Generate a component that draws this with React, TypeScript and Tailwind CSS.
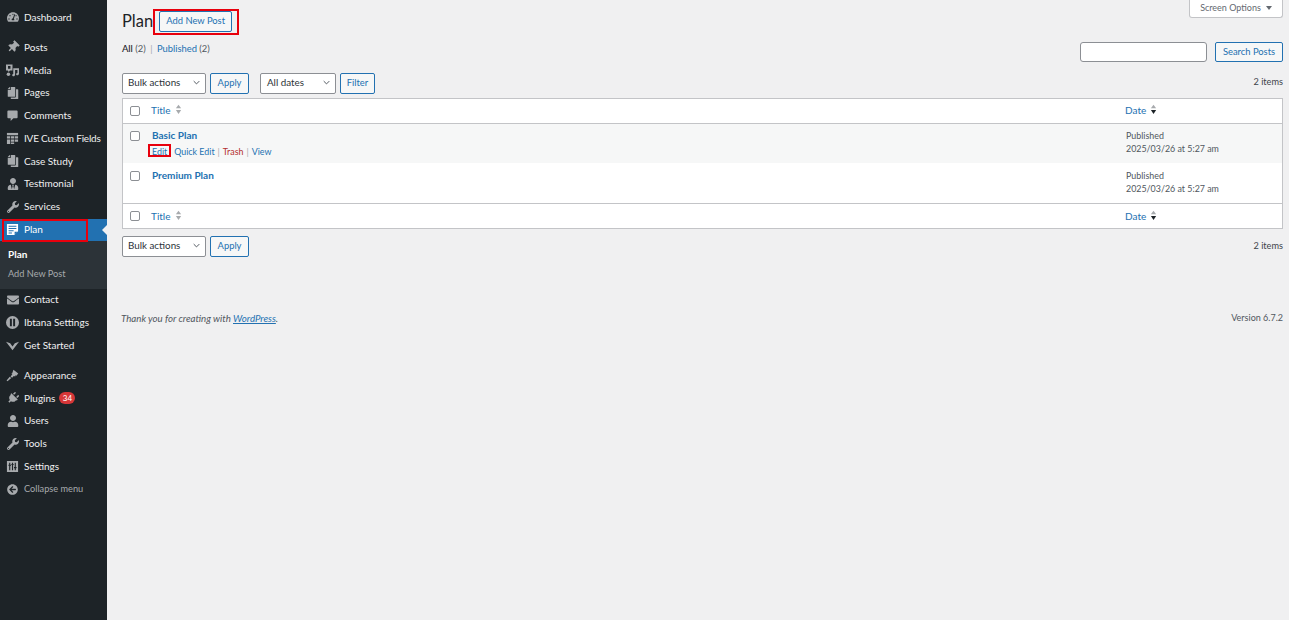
import React from "react";
import {
  FaTachometerAlt,
  FaThumbtack,
  FaCopy,
  FaUser,
  FaWrench,
  FaEnvelope,
  FaPlug,
  FaArrowCircleLeft,
  FaUserTie,
} from "react-icons/fa";

const font = { fontFamily: "Lato, 'Noto Sans', sans-serif" };

function MediaIcon() {
  return (
    <svg viewBox="0 0 14 14" className="w-[13px] h-[13px]" fill="#a7aaad">
      <path d="M0 .5h7v6.5H4.2L3 8.6 1.8 7H0z M2.2 2.2v2.8h2.6V2.2z" fillRule="evenodd" />
      <path d="M7.8 4.5H14v6c0 1.2-1.2 1.9-2.2 1.5-.9-.3-1.1-1.2-.7-1.9.3-.4.7-.6 1.2-.5V6.5H9.8v5.2c0 1.2-1.2 1.9-2.2 1.5-.9-.3-1.1-1.2-.7-1.9.3-.4.6-.5.9-.5z" />
      <circle cx="2.6" cy="11" r="1.9" />
    </svg>
  );
}

function CommentIcon() {
  return (
    <svg viewBox="0 0 14 14" className="w-[13px] h-[13px]" fill="#a7aaad">
      <path d="M2.5 1.5h9a1 1 0 0 1 1 1v6.5a1 1 0 0 1-1 1H8l-3 3v-3H2.5a1 1 0 0 1-1-1V2.5a1 1 0 0 1 1-1z" />
    </svg>
  );
}

function FieldsIcon() {
  return (
    <svg viewBox="0 0 14 14" className="w-[13px] h-[13px]" fill="#a7aaad">
      <path d="M1 1h12v2.5H1z" />
      <path d="M1 4.5h3.5V7H1zM5.3 4.5h3.5V7H5.3zM9.5 4.5H13V7H9.5z" />
      <path d="M1 8h3.5v5H1zM5.3 8h3.5v2.5H5.3zM9.5 8H13v2.5H9.5zM5.3 11.3h3.5V13H5.3z" />
    </svg>
  );
}

function PlanIcon() {
  return (
    <svg viewBox="0 0 14 14" className="w-[13px] h-[13px]" fill="#fff">
      <path
        d="M1 1h12v8l-4 4H1z M2.8 3v1.1h8.4V3z M2.8 5.4v1.1h8.4V5.4z M2.8 7.8v1.1h5.4V7.8z M2.8 10.1v1.1h3.6v-1.1z"
        fillRule="evenodd"
      />
      <path d="M9.3 12.6V9.4h3.2z" fill="#2271b1" />
    </svg>
  );
}

function IbtanaIcon() {
  return (
    <svg viewBox="0 0 14 14" className="w-[13px] h-[13px]" fill="#a7aaad">
      <path
        d="M7 0a7 7 0 1 1 0 14A7 7 0 0 1 7 0z M4.2 3v8h2.1V3z M7.7 3v8h2.1V3z"
        fillRule="evenodd"
      />
    </svg>
  );
}

function StartedIcon() {
  return (
    <svg viewBox="0 0 14 14" className="w-[13px] h-[13px]" fill="#a7aaad">
      <path d="M0 3l4.5 1.6L7 8l2.5-3.4L14 3 7 12z" />
    </svg>
  );
}

function AppearanceIcon() {
  return (
    <svg viewBox="0 0 14 14" className="w-[13px] h-[13px]" fill="#a7aaad">
      <path d="M8 .8l5.2 4-2 2.6-1-.6-.3 1.2L8.4 7.6 6.6 9.5 4.9 8l2-2.4L5.6 5.3l1.1-.6z" />
      <path d="M5.7 9.6L4 8.3 .6 12.3l1 1z" />
    </svg>
  );
}

function SettingsIcon() {
  return (
    <svg viewBox="0 0 14 14" className="w-[13px] h-[13px]" fill="#a7aaad">
      <path
        d="M1 1h12v12H1z M3.4 3v2H2.6v1.2h.8V11h1.2V6.2h.8V5h-.8V3z M9.4 3v4.6h-.8v1.2h.8V11h1.2V8.8h.8V7.6h-.8V3z M6.4 3v1.2H5.8v1.2h.6V11h1.2V5.4h.6V4.2h-.6V3z"
        fillRule="evenodd"
      />
    </svg>
  );
}

type MenuItem = { label: string; icon: React.ReactNode; tight?: boolean };

const ic = "w-[12px] h-[12px] text-[#a7aaad]";

const topItems: MenuItem[] = [
  { label: "Posts", icon: <FaThumbtack className={ic + " rotate-45"} /> },
  { label: "Media", icon: <MediaIcon /> },
  { label: "Pages", icon: <FaCopy className={ic + " -scale-x-100"} /> },
  { label: "Comments", icon: <CommentIcon /> },
  { label: "IVE Custom Fields", icon: <FieldsIcon />, tight: true },
  { label: "Case Study", icon: <FaCopy className={ic + " -scale-x-100"} /> },
  { label: "Testimonial", icon: <FaUserTie className={ic} /> },
  { label: "Services", icon: <FaWrench className={ic} /> },
];

const midItems: MenuItem[] = [
  { label: "Contact", icon: <FaEnvelope className={ic} /> },
  { label: "Ibtana Settings", icon: <IbtanaIcon /> },
  { label: "Get Started", icon: <StartedIcon /> },
];

function Row({ item }: { item: MenuItem }) {
  return (
    <div className="flex items-center h-[22.75px] text-[#f0f0f1]">
      <span className="w-[24px] flex justify-center pl-[1px]">{item.icon}</span>
      <span className={"whitespace-nowrap " + (item.tight ? "tracking-[-0.2px]" : "")}>{item.label}</span>
    </div>
  );
}

function Sidebar() {
  return (
    <aside className="w-[107px] shrink-0 bg-[#1d2327] text-[10px] min-h-[620px] pt-[6px]">
      <Row item={{ label: "Dashboard", icon: <FaTachometerAlt className={ic} /> }} />
      <div className="mt-[7.25px]">
        {topItems.map((item) => (
          <Row key={item.label} item={item} />
        ))}
      </div>
      <div className="relative flex items-center h-[22px] mt-[1px] bg-[#2271b1] text-white pb-[1px]">
        <span className="w-[24px] flex justify-center pl-[1px]">
          <PlanIcon />
        </span>
        <span>Plan</span>
        <span className="absolute right-0 top-[6px] w-0 h-0 border-y-[5px] border-y-transparent border-r-[5px] border-r-[#f0f0f1]" />
        <span className="absolute left-[2px] top-0 w-[86px] h-[23px] border-2 border-[#e8000d]" />
      </div>
      <div className="bg-[#2c3338] h-[47.5px] pl-[8px] pt-[4px]">
        <div className="h-[19px] flex items-center text-white font-bold">Plan</div>
        <div className="h-[19px] flex items-center text-[#a7aaad] text-[9.2px]">Add New Post</div>
      </div>
      {midItems.map((item) => (
        <Row key={item.label} item={item} />
      ))}
      <div className="mt-[7.3px]">
        <Row item={{ label: "Appearance", icon: <AppearanceIcon /> }} />
        <div className="flex items-center h-[22.75px] text-[#f0f0f1]">
          <span className="w-[24px] flex justify-center pl-[1px]">
            <FaPlug className={ic + " rotate-45"} />
          </span>
          <span>Plugins</span>
          <span className="ml-[4px] h-[12px] w-[16px] rounded-full bg-[#d63638] text-white text-[8px] flex items-center justify-center">
            34
          </span>
        </div>
        <Row item={{ label: "Users", icon: <FaUser className={ic} /> }} />
        <Row item={{ label: "Tools", icon: <FaWrench className={ic} /> }} />
        <Row item={{ label: "Settings", icon: <SettingsIcon /> }} />
        <div className="flex items-center h-[22.75px] text-[#a7aaad] text-[9.2px]">
          <span className="w-[24px] flex justify-center pl-[1px]">
            <FaArrowCircleLeft className="w-[11px] h-[11px] text-[#a7aaad]" />
          </span>
          <span>Collapse menu</span>
        </div>
      </div>
    </aside>
  );
}

function Button({ children, className = "" }: { children: React.ReactNode; className?: string }) {
  return (
    <button
      className={
        "h-[21px] pb-[1px] border border-[#2271b1] rounded-[2px] bg-[#f6f7f7] text-[#2271b1] text-[9.4px] flex items-center justify-center " +
        className
      }
    >
      {children}
    </button>
  );
}

function Select({ label, className = "" }: { label: string; className?: string }) {
  return (
    <div
      className={
        "h-[21px] pb-[2px] border border-[#8c8f94] rounded-[2px] bg-white text-[#2c3338] text-[9.8px] flex items-center justify-between pl-[5px] pr-[5px] " +
        className
      }
    >
      <span>{label}</span>
      <svg viewBox="0 0 10 6" className="w-[7px] h-[5px]" fill="none" stroke="#50575e" strokeWidth="1.4">
        <path d="M1 1l4 4 4-4" />
      </svg>
    </div>
  );
}

function SortIcon({ active = false }: { active?: boolean }) {
  return (
    <svg viewBox="0 0 8 12" className="w-[7px] h-[11px] ml-[4px] mb-[2px]">
      <path d="M4 0.5L7 4.5H1z" fill="#a7aaad" />
      <path d="M4 11L7 6.5H1z" fill={active ? "#1d2327" : "#a7aaad"} />
    </svg>
  );
}

function Check() {
  return (
    <input
      type="checkbox"
      className="appearance-none block w-[10px] h-[10px] border border-[#8c8f94] rounded-[2px] bg-white"
    />
  );
}

function HeaderRow({ border }: { border: string }) {
  return (
    <div className={"grid grid-cols-[28px_1fr_157px] items-center h-[25px] " + border}>
      <div className="pl-[7px]">
        <Check />
      </div>
      <div className="flex items-center text-[#2271b1]">
        Title
        <SortIcon />
      </div>
      <div className="flex items-center text-[#2271b1]">
        Date
        <SortIcon active />
      </div>
    </div>
  );
}

function PostRow({ title, hover }: { title: string; hover?: boolean }) {
  return (
    <div className={"grid grid-cols-[28px_1fr_157px] " + (hover ? "h-[39px] bg-[#f6f7f7]" : "h-[40px] bg-white pt-[1px]")}>
      <div className="pl-[7px] pt-[7px]">
        <Check />
      </div>
      <div className="pl-[1px]">
        <div className="h-[23px] flex items-center font-bold text-[#2271b1]">{title}</div>
        {hover && (
          <div className="flex items-center gap-[3px] text-[8.9px] text-[#2271b1] h-[10px]">
            <span className="relative mr-[4px]">
              Edit
              <span className="absolute left-[-4px] top-[-1px] w-[23px] h-[13px] border-2 border-[#e8000d]" />
            </span>
            <span>Quick Edit</span>
            <span className="text-[#a7aaad]">|</span>
            <span className="text-[#b32d2e]">Trash</span>
            <span className="text-[#a7aaad]">|</span>
            <span>View</span>
          </div>
        )}
      </div>
      <div className="pl-[1px] text-[#50575e] text-[8.9px] leading-[13px] pt-[5px]">
        <div>Published</div>
        <div>2025/03/26 at 5:27 am</div>
      </div>
    </div>
  );
}

export default function App() {
  return (
    <div className="flex w-full min-h-[620px] bg-[#f0f0f1] overflow-hidden" style={font}>
      <Sidebar />
      <main className="relative flex-1 pl-[15px] pr-[6px] text-[10px] text-[#3c434a]">
        <div className="absolute right-[6px] top-0 w-[94px] h-[18px] pb-[2px] bg-white border border-t-0 border-[#c3c4c7] rounded-b-[3px] flex items-center justify-center gap-[5px] text-[#646970] text-[9px]">
          Screen Options
          <span className="w-0 h-0 border-x-[3.5px] border-x-transparent border-t-[4px] border-t-[#646970]" />
        </div>

        <div className="flex items-center h-[21px] mt-[11px]">
          <h1 className="text-[16.5px] text-[#1d2327]">Plan</h1>
          <div className="relative ml-[6px]">
            <Button className="w-[73px]">Add New Post</Button>
            <span className="absolute left-[-6px] top-[-2px] w-[86px] h-[26px] border-2 border-[#e8000d]" />
          </div>
        </div>

        <div className="flex justify-between mt-[10px] h-[20px]">
          <div className="text-[#50575e] text-[9.4px] leading-[13px]">
            <span className="text-[#1d2327] font-medium">All</span> (2){" "}
            <span className="text-[#a7aaad] mx-[2px]">|</span>{" "}
            <span className="text-[#2271b1]">Published</span> (2)
          </div>
          <div className="flex">
            <div className="w-[127px] h-[20px] bg-white border border-[#8c8f94] rounded-[3px]" />
            <Button className="ml-[8px] w-[68px] !h-[20px] !pb-0">Search Posts</Button>
          </div>
        </div>

        <div className="flex items-center mt-[11px]">
          <Select label="Bulk actions" className="w-[84px]" />
          <Button className="ml-[4px] w-[39px]">Apply</Button>
          <Select label="All dates" className="ml-[11px] w-[76px] !pl-[6px]" />
          <Button className="ml-[4px] w-[35px]">Filter</Button>
          <span className="ml-auto mb-[3px] text-[#3c434a] text-[9.2px]">2 items</span>
        </div>

        <div className="mt-[4px] border border-[#c3c4c7] bg-white">
          <HeaderRow border="border-b border-[#c3c4c7] pb-[1px]" />
          <PostRow title="Basic Plan" hover />
          <PostRow title="Premium Plan" />
          <HeaderRow border="border-t border-[#c3c4c7]" />
        </div>

        <div className="flex items-center mt-[7px]">
          <Select label="Bulk actions" className="w-[84px]" />
          <Button className="ml-[4px] w-[39px]">Apply</Button>
          <span className="ml-auto mb-[1px] text-[#3c434a] text-[9.2px]">2 items</span>
        </div>

        <div className="flex justify-between mt-[54px] text-[#50575e] text-[9px]">
          <span className="italic ml-[-1px] text-[9.7px]">
            Thank you for creating with <span className="underline text-[#2271b1]">WordPress</span>.
          </span>
          <span>Version 6.7.2</span>
        </div>
      </main>
    </div>
  );
}
